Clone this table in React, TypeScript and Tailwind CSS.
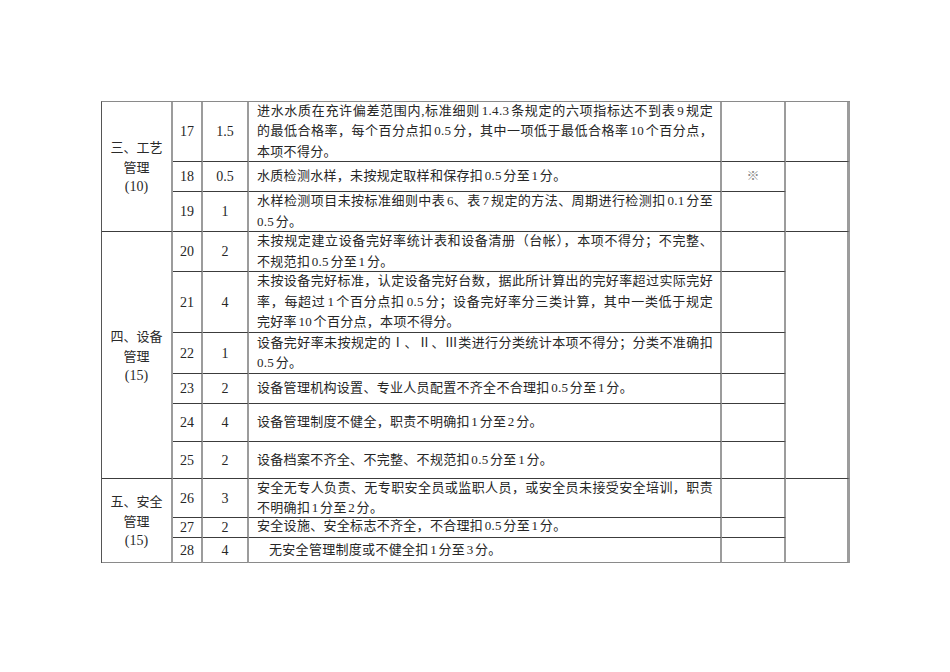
import type { ReactNode } from "react"

const FONT = "font-['Liberation_Serif','Noto_Sans_CJK_SC',serif]"

type Line = { t: string; full?: boolean }

interface Row {
  no: string
  score: string
  lines: Line[]
  mark?: string
  indent?: boolean
}

const rows: Row[] = [
  {
    no: "17",
    score: "1.5",
    lines: [
      { t: "进水水质在充许偏差范围内,标准细则 1.4.3 条规定的六项指标达不到表 9 规定", full: true },
      { t: "的最低合格率，每个百分点扣 0.5 分，其中一项低于最低合格率 10 个百分点，", full: true },
      { t: "本项不得分。" },
    ],
  },
  {
    no: "18",
    score: "0.5",
    lines: [{ t: "水质检测水样，未按规定取样和保存扣 0.5 分至 1 分。" }],
    mark: "※",
  },
  {
    no: "19",
    score: "1",
    lines: [
      { t: "水样检测项目未按标准细则中表 6、表 7 规定的方法、周期进行检测扣 0.1 分至", full: true },
      { t: "0.5 分。" },
    ],
  },
  {
    no: "20",
    score: "2",
    lines: [
      { t: "未按规定建立设备完好率统计表和设备清册（台帐），本项不得分；不完整、", full: true },
      { t: "不规范扣 0.5 分至 1 分。" },
    ],
  },
  {
    no: "21",
    score: "4",
    lines: [
      { t: "未按设备完好标准，认定设备完好台数，据此所计算出的完好率超过实际完好", full: true },
      { t: "率，每超过 1 个百分点扣 0.5 分；设备完好率分三类计算，其中一类低于规定", full: true },
      { t: "完好率 10 个百分点，本项不得分。" },
    ],
  },
  {
    no: "22",
    score: "1",
    lines: [
      { t: "设备完好率未按规定的Ⅰ、Ⅱ、Ⅲ类进行分类统计本项不得分；分类不准确扣", full: true },
      { t: "0.5 分。" },
    ],
  },
  { no: "23", score: "2", lines: [{ t: "设备管理机构设置、专业人员配置不齐全不合理扣 0.5 分至 1 分。" }] },
  { no: "24", score: "4", lines: [{ t: "设备管理制度不健全，职责不明确扣 1 分至 2 分。" }] },
  { no: "25", score: "2", lines: [{ t: "设备档案不齐全、不完整、不规范扣 0.5 分至 1 分。" }] },
  {
    no: "26",
    score: "3",
    lines: [
      { t: "安全无专人负责、无专职安全员或监职人员，或安全员未接受安全培训，职责", full: true },
      { t: "不明确扣 1 分至 2 分。" },
    ],
  },
  { no: "27", score: "2", lines: [{ t: "安全设施、安全标志不齐全，不合理扣 0.5 分至 1 分。" }] },
  { no: "28", score: "4", lines: [{ t: "无安全管理制度或不健全扣 1 分至 3 分。" }], indent: true },
]

const rowStart = [
  "row-start-1",
  "row-start-2",
  "row-start-3",
  "row-start-4",
  "row-start-5",
  "row-start-6",
  "row-start-7",
  "row-start-8",
  "row-start-9",
  "row-start-10",
  "row-start-11",
  "row-start-12",
]

function Cell({
  className = "",
  last = false,
  children,
}: {
  className?: string
  last?: boolean
  children?: ReactNode
}) {
  return (
    <div
      className={`flex border-r-2 border-r-[#9c9c9c] border-b ${
        last ? "border-b-[#8a8a8a]" : "border-b-[#3c3c3c]"
      } ${className}`}
    >
      {children}
    </div>
  )
}

function Section({
  pos,
  title,
  last = false,
}: {
  pos: string
  title: string[]
  last?: boolean
}) {
  return (
    <Cell className={`col-start-1 ${pos} flex-col items-center justify-center`} last={last}>
      <div className="text-center text-[13px] leading-[20px] text-[#2a2a2a]">
        <div>{title[0]}</div>
        <div>{title[1]}</div>
        <div className="text-[14px] leading-[17px]">{title[2]}</div>
      </div>
    </Cell>
  )
}

export default function App() {
  return (
    <div className={`w-[950px] h-[672px] bg-white ${FONT} text-[#262626]`}>
      <div className="pt-[101px] pl-[101px]">
        <div className="grid w-[749px] grid-cols-[71px_30px_46px_473px_64px_64px] grid-rows-[60px_30px_40px_40px_61px_41px_30px_38px_37px_39px_20px_25px] border-l border-t border-l-[#555] border-t-[#8a8a8a]">
          <Section pos="row-start-1 row-span-3" title={["三、工艺", "管理", "(10)"]} />
          <Section pos="row-start-4 row-span-6" title={["四、设备", "管理", "(15)"]} />
          <Section pos="row-start-10 row-span-3" title={["五、安全", "管理", "(15)"]} last />

          {rows.map((r, i) => {
            const last = i === rows.length - 1
            return (
              <div key={r.no} className="contents">
                <Cell className={`col-start-2 ${rowStart[i]} items-center justify-center text-[14px]`} last={last}>
                  {r.no}
                </Cell>
                <Cell className={`col-start-3 ${rowStart[i]} items-center justify-center text-[14px]`} last={last}>
                  {r.score}
                </Cell>
                <Cell
                  className={`col-start-4 ${rowStart[i]} flex-col justify-center pl-[8px] pr-[7px] ${
                    r.no === "27" ? "pb-[3px]" : ""
                  }`}
                  last={last}
                >
                  {r.lines.map((l, j) => (
                    <div
                      key={j}
                      className={`whitespace-nowrap text-[13px] leading-[20.5px] tracking-[0.3px] [word-spacing:-2px] ${
                        l.full ? "text-justify [text-align-last:justify]" : ""
                      } ${r.indent ? "pl-[12px]" : ""}`}
                    >
                      {l.t}
                    </div>
                  ))}
                </Cell>
                <Cell className={`col-start-5 ${rowStart[i]} justify-center pt-[4px] text-[13px] text-[#8a8a8a]`} last={last}>
                  {r.mark ?? ""}
                </Cell>
              </div>
            )
          })}

          <Cell className="col-start-6 row-start-1 border-r-[3px] border-r-[#3a3a3a]" />
          <Cell className="col-start-6 row-start-2 row-span-2 border-r-[3px] border-r-[#3a3a3a]" />
          <Cell className="col-start-6 row-start-4 row-span-6 border-r-[3px] border-r-[#3a3a3a]" />
          <Cell className="col-start-6 row-start-10 row-span-3 border-r-[3px] border-r-[#3a3a3a]" last />
        </div>
      </div>
    </div>
  )
}
